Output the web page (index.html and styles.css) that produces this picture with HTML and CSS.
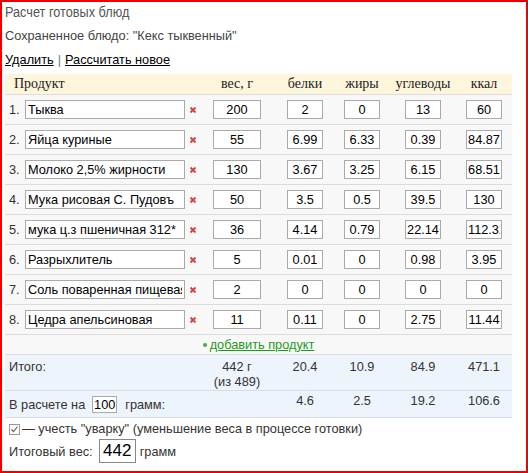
FILE: index.html
```html
<!DOCTYPE html>
<html lang="ru">
<head>
<meta charset="utf-8">
<title>Расчет готовых блюд</title>
<link rel="stylesheet" href="styles.css">
</head>
<body>
<div class="frame">
  <h1 class="title"><span class="title-text">Расчет готовых блюд</span></h1>
  <div class="saved">Сохраненное блюдо: "Кекс тыквенный"</div>
  <div class="links"><a href="#">Удалить</a><span class="sep">|</span><a href="#">Рассчитать новое</a></div>

  <div class="calc">
    <div class="row head">
      <div class="h-name">Продукт</div>
      <div></div>
      <div class="c">вес, г</div>
      <div class="c">белки</div>
      <div class="c">жиры</div>
      <div class="c">углеводы</div>
      <div class="c">ккал</div>
    </div>

    <div class="row item">
      <div class="namebox"><span class="num">1.</span><input class="nm" value="Тыква"></div>
      <div class="del"><svg width="6" height="6" viewBox="0 0 6 6"><path d="M0.5 0.5L5.5 5.5M5.5 0.5L0.5 5.5"/></svg></div>
      <div class="c"><input class="wt" value="200"></div>
      <div class="c"><input class="val" value="2"></div>
      <div class="c"><input class="val" value="0"></div>
      <div class="c"><input class="val" value="13"></div>
      <div class="c"><input class="val" value="60"></div>
    </div>
    <div class="row item">
      <div class="namebox"><span class="num">2.</span><input class="nm" value="Яйца куриные"></div>
      <div class="del"><svg width="6" height="6" viewBox="0 0 6 6"><path d="M0.5 0.5L5.5 5.5M5.5 0.5L0.5 5.5"/></svg></div>
      <div class="c"><input class="wt" value="55"></div>
      <div class="c"><input class="val" value="6.99"></div>
      <div class="c"><input class="val" value="6.33"></div>
      <div class="c"><input class="val" value="0.39"></div>
      <div class="c"><input class="val" value="84.87"></div>
    </div>
    <div class="row item">
      <div class="namebox"><span class="num">3.</span><input class="nm" value="Молоко 2,5% жирности"></div>
      <div class="del"><svg width="6" height="6" viewBox="0 0 6 6"><path d="M0.5 0.5L5.5 5.5M5.5 0.5L0.5 5.5"/></svg></div>
      <div class="c"><input class="wt" value="130"></div>
      <div class="c"><input class="val" value="3.67"></div>
      <div class="c"><input class="val" value="3.25"></div>
      <div class="c"><input class="val" value="6.15"></div>
      <div class="c"><input class="val" value="68.51"></div>
    </div>
    <div class="row item">
      <div class="namebox"><span class="num">4.</span><input class="nm" value="Мука рисовая С. Пудовъ"></div>
      <div class="del"><svg width="6" height="6" viewBox="0 0 6 6"><path d="M0.5 0.5L5.5 5.5M5.5 0.5L0.5 5.5"/></svg></div>
      <div class="c"><input class="wt" value="50"></div>
      <div class="c"><input class="val" value="3.5"></div>
      <div class="c"><input class="val" value="0.5"></div>
      <div class="c"><input class="val" value="39.5"></div>
      <div class="c"><input class="val" value="130"></div>
    </div>
    <div class="row item">
      <div class="namebox"><span class="num">5.</span><input class="nm" value="мука ц.з пшеничная 312*"></div>
      <div class="del"><svg width="6" height="6" viewBox="0 0 6 6"><path d="M0.5 0.5L5.5 5.5M5.5 0.5L0.5 5.5"/></svg></div>
      <div class="c"><input class="wt" value="36"></div>
      <div class="c"><input class="val" value="4.14"></div>
      <div class="c"><input class="val" value="0.79"></div>
      <div class="c"><input class="val" value="22.14"></div>
      <div class="c"><input class="val" value="112.32"></div>
    </div>
    <div class="row item">
      <div class="namebox"><span class="num">6.</span><input class="nm" value="Разрыхлитель"></div>
      <div class="del"><svg width="6" height="6" viewBox="0 0 6 6"><path d="M0.5 0.5L5.5 5.5M5.5 0.5L0.5 5.5"/></svg></div>
      <div class="c"><input class="wt" value="5"></div>
      <div class="c"><input class="val" value="0.01"></div>
      <div class="c"><input class="val" value="0"></div>
      <div class="c"><input class="val" value="0.98"></div>
      <div class="c"><input class="val" value="3.95"></div>
    </div>
    <div class="row item">
      <div class="namebox"><span class="num">7.</span><input class="nm" value="Соль поваренная пищевая"></div>
      <div class="del"><svg width="6" height="6" viewBox="0 0 6 6"><path d="M0.5 0.5L5.5 5.5M5.5 0.5L0.5 5.5"/></svg></div>
      <div class="c"><input class="wt" value="2"></div>
      <div class="c"><input class="val" value="0"></div>
      <div class="c"><input class="val" value="0"></div>
      <div class="c"><input class="val" value="0"></div>
      <div class="c"><input class="val" value="0"></div>
    </div>
    <div class="row item">
      <div class="namebox"><span class="num">8.</span><input class="nm" value="Цедра апельсиновая"></div>
      <div class="del"><svg width="6" height="6" viewBox="0 0 6 6"><path d="M0.5 0.5L5.5 5.5M5.5 0.5L0.5 5.5"/></svg></div>
      <div class="c"><input class="wt" value="11"></div>
      <div class="c"><input class="val" value="0.11"></div>
      <div class="c"><input class="val" value="0"></div>
      <div class="c"><input class="val" value="2.75"></div>
      <div class="c"><input class="val" value="11.44"></div>
    </div>

    <div class="addrow"><span class="dot"></span><a href="#">добавить продукт</a></div>

    <div class="row total">
      <div class="lbl span2">Итого:</div>
      <div class="c">442 г<br>(из 489)</div>
      <div class="c">20.4</div>
      <div class="c">10.9</div>
      <div class="c">84.9</div>
      <div class="c">471.1</div>
    </div>
    <div class="row per">
      <div class="perlbl span3">В расчете на<input class="small" value="100">грамм:</div>
      <div class="c">4.6</div>
      <div class="c">2.5</div>
      <div class="c">19.2</div>
      <div class="c">106.6</div>
    </div>
  </div>

  <div class="boil"><svg class="chk" width="11" height="11" viewBox="0 0 11 11"><rect x="0.5" y="0.5" width="10" height="10"/><path d="M2.5 5.5L4.5 7.5L8.5 2.5"/></svg>— учесть "уварку" (уменьшение веса в процессе готовки)</div>
  <div class="final">Итоговый вес:<input class="big" value="442">грамм</div>
</div>
</body>
</html>
```

FILE: styles.css
```css
html, body {
  margin: 0;
  padding: 0;
  background: #fff;
}

.frame {
  width: 528px;
  height: 473px;
  box-sizing: border-box;
  border: 2px solid #ee0000;
  padding: 0 0 0 3px;
  font-family: "Liberation Sans", Arial, sans-serif;
  font-size: 12.75px;
  color: #333;
}

.title {
  margin: 0;
  font-family: "Liberation Sans", Arial, sans-serif;
  font-size: 15.5px;
  line-height: 20px;
  font-weight: normal;
  color: #555;
}

.title-text {
  display: inline-block;
  transform: scaleX(0.82);
  transform-origin: left center;
}

.saved {
  margin-top: 6px;
  line-height: 16px;
  color: #444;
}

.links {
  margin-top: 8px;
  line-height: 16px;
}

.links a {
  color: #000;
  text-decoration: underline;
}

.links .sep {
  color: #777;
  margin: 0 4px;
}

.calc {
  margin-top: 6px;
  width: 507px;
}

.row {
  display: grid;
  grid-template-columns: 182px 11px 78px 58px 56px 66px 56px;
  align-items: center;
  border-bottom: 1px solid #dcdcdc;
}

.head {
  height: 20px;
  background: #fdf5dc;
  font-family: "Liberation Serif", "Times New Roman", serif;
  font-size: 14px;
  color: #222;
}

.h-name {
  padding-left: 9px;
}

.c {
  text-align: center;
  display: flex;
  flex-direction: column;
  align-items: center;
}

.item {
  height: 29px;
  background: #f8f8f8;
}

.namebox {
  display: flex;
  align-items: center;
  padding-left: 4px;
}

.num {
  width: 16px;
  color: #333;
}

input {
  font-family: "Liberation Sans", Arial, sans-serif;
  font-size: 12.75px;
  color: #000;
  background: #fff;
  border: 1px solid #aaa;
  box-sizing: border-box;
  margin: 0;
  outline: none;
}

.nm {
  width: 160px;
  height: 19px;
  padding: 0 2px;
}

.wt {
  width: 48px;
  height: 19px;
  padding: 0 1px;
  text-align: center;
}

.val {
  width: 36px;
  height: 19px;
  padding: 0 1px;
  text-align: center;
}

.del {
  display: flex;
  justify-content: center;
  align-items: center;
}

.del svg path {
  stroke: #d04848;
  stroke-width: 2;
  fill: none;
}

.addrow {
  height: 19px;
  background: #f8f8f8;
  border-bottom: 1px solid #dcdcdc;
  display: flex;
  justify-content: center;
  align-items: center;
}

.addrow a {
  color: #1e9a1e;
  text-decoration: underline;
}

.dot {
  width: 4px;
  height: 4px;
  border-radius: 50%;
  background: #3cb43c;
  margin-right: 3px;
}

.total {
  align-items: start;
  background: #eef4fc;
  border-bottom: 1px solid #d6dde8;
  line-height: 15px;
  padding-top: 4px;
  box-sizing: border-box;
  height: 36px;
}

.per {
  height: 27px;
  box-sizing: border-box;
  background: #eef4fc;
  border-bottom: 1px solid #d6dde8;
  line-height: 15px;
}

.per .c {
  align-self: start;
  padding-top: 2px;
}

.lbl {
  padding-left: 4px;
}

.span2 {
  grid-column: span 2;
}

.span3 {
  grid-column: span 3;
}

.perlbl {
  display: flex;
  align-items: center;
  padding-left: 4px;
}

.small {
  width: 25px;
  height: 17px;
  padding: 0;
  text-align: center;
  margin: 0 8px 0 7px;
}

.boil {
  margin-top: 3px;
  padding-left: 4px;
  line-height: 16px;
  display: flex;
  align-items: center;
}

.chk {
  margin-right: 2px;
}

.chk rect {
  fill: #fff;
  stroke: #999;
}

.chk path {
  fill: none;
  stroke: #666;
  stroke-width: 1.2;
}

.final {
  margin-top: 2px;
  padding-left: 4px;
  display: flex;
  align-items: center;
}

.big {
  width: 37px;
  height: 24px;
  font-size: 17px;
  padding: 0;
  text-align: center;
  border-color: #888;
  margin: 0 4px 0 6px;
}
```
